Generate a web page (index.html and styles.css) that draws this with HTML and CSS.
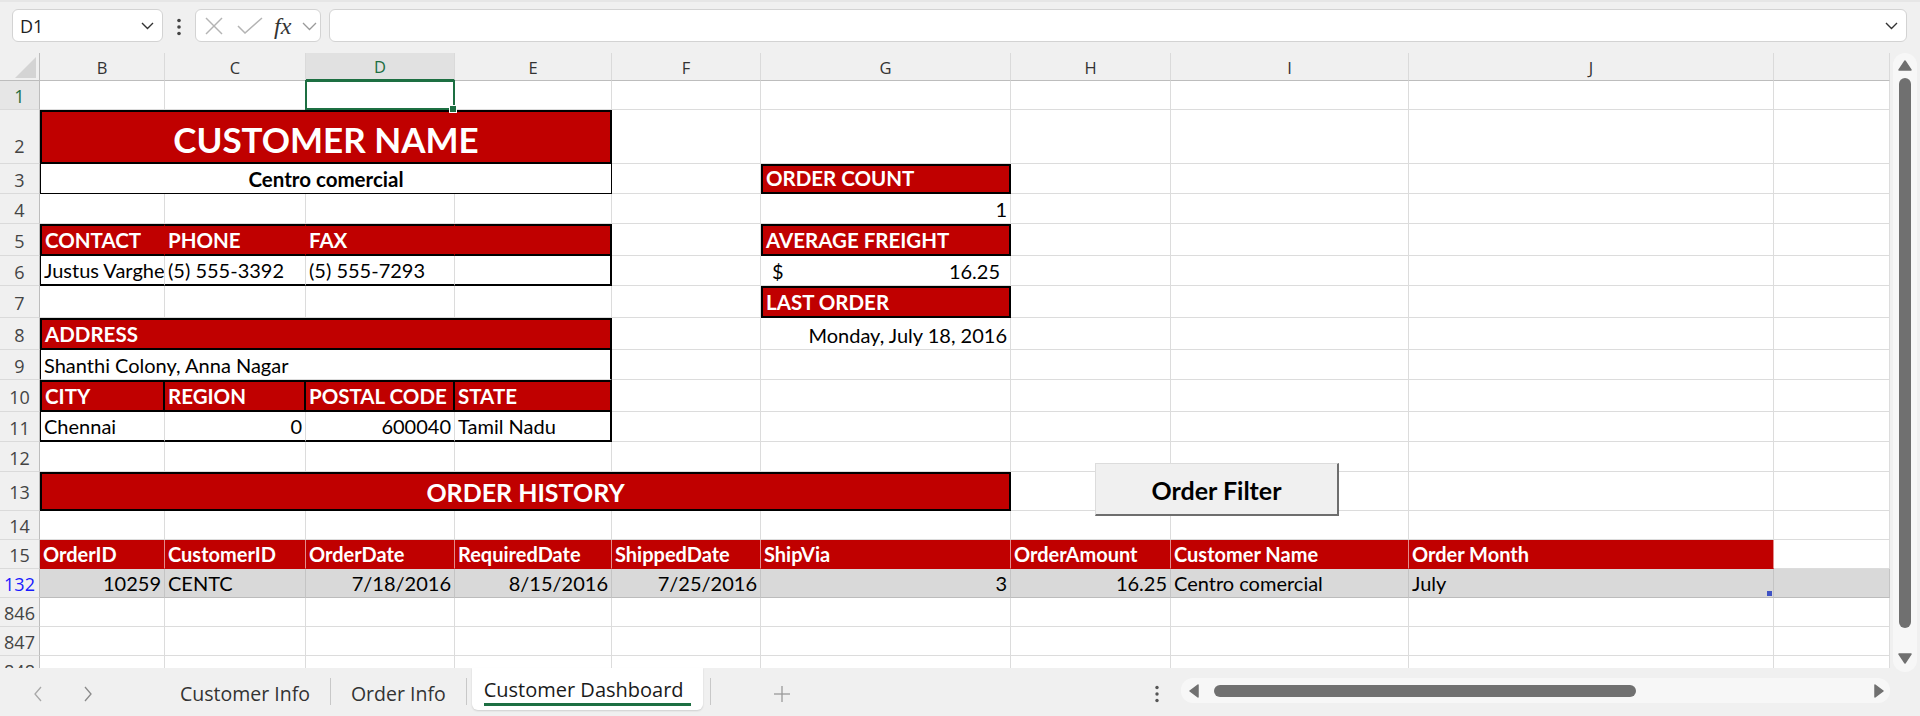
FILE: index.html
```html
<!DOCTYPE html>
<html>
<head>
<meta charset="utf-8">
<title>Customer Dashboard</title>
<link rel="stylesheet" href="styles.css">
</head>
<body>
<div class="app">
  <div class="fbar">
    <div class="namebox"><span class="nb-text">D1</span><svg class="chev" width="13" height="8" viewBox="0 0 13 8"><polyline points="1,1 6.5,6.5 12,1" fill="none" stroke="#333" stroke-width="1.4"/></svg></div>
    <svg class="vdots" width="8" height="18" viewBox="0 0 8 18"><circle cx="4" cy="2.5" r="1.8" fill="#444"/><circle cx="4" cy="9" r="1.8" fill="#444"/><circle cx="4" cy="15.5" r="1.8" fill="#444"/></svg>
    <div class="fxbox">
      <svg class="ico-x" width="20" height="18" viewBox="0 0 20 18"><line x1="2" y1="1" x2="18" y2="17" stroke="#b4b4b4" stroke-width="1.5"/><line x1="18" y1="1" x2="2" y2="17" stroke="#b4b4b4" stroke-width="1.5"/></svg>
      <svg class="ico-ok" width="26" height="17" viewBox="0 0 26 17"><polyline points="1,9 8,16 25,1" fill="none" stroke="#b4b4b4" stroke-width="1.5"/></svg>
      <span class="fx">fx</span>
      <svg class="ico-dd" width="15" height="9" viewBox="0 0 15 9"><polyline points="1,1 7.5,7.5 14,1" fill="none" stroke="#9a9a9a" stroke-width="1.3"/></svg>
    </div>
    <div class="finput"><svg class="chev" width="13" height="8" viewBox="0 0 13 8"><polyline points="1,1 6.5,6.5 12,1" fill="none" stroke="#333" stroke-width="1.4"/></svg></div>
  </div>

  <div class="main">
    <div class="sheet">
      <div class="corner"><svg width="40" height="28" viewBox="0 0 40 28"><polygon points="15,25 36,4 36,25" fill="#d4d4d4"/></svg></div>
      <div class="ch">B</div><div class="ch">C</div><div class="ch csel">D</div><div class="ch">E</div><div class="ch">F</div><div class="ch">G</div><div class="ch">H</div><div class="ch">I</div><div class="ch">J</div><div class="ch"></div>

      <div class="rh rsel">1</div>
      <div class="c"></div><div class="c"></div><div class="c sel"></div><div class="c"></div><div class="c"></div><div class="c"></div><div class="c"></div><div class="c"></div><div class="c"></div><div class="c"></div>

      <div class="rh rh2">2</div>
      <div class="c red big ctr bx span4">CUSTOMER NAME</div>
      <div class="c"></div><div class="c"></div><div class="c"></div><div class="c"></div><div class="c"></div><div class="c"></div>

      <div class="rh">3</div>
      <div class="c bold ctr bl1 br1 bb1 span4">Centro comercial</div>
      <div class="c"></div>
      <div class="c red lbl bx">ORDER COUNT</div>
      <div class="c"></div><div class="c"></div><div class="c"></div><div class="c"></div>

      <div class="rh">4</div>
      <div class="c"></div><div class="c"></div><div class="c"></div><div class="c"></div><div class="c"></div>
      <div class="c r">1</div>
      <div class="c"></div><div class="c"></div><div class="c"></div><div class="c"></div>

      <div class="rh">5</div>
      <div class="c red lbl bt2 bb2 bl2">CONTACT</div>
      <div class="c red lbl bt2 bb2">PHONE</div>
      <div class="c red lbl bt2 bb2">FAX</div>
      <div class="c red lbl bt2 bb2 br2"></div>
      <div class="c"></div>
      <div class="c red lbl bx">AVERAGE FREIGHT</div>
      <div class="c"></div><div class="c"></div><div class="c"></div><div class="c"></div>

      <div class="rh">6</div>
      <div class="c bl1 bb2">Justus Varghese</div>
      <div class="c bb2">(5) 555-3392</div>
      <div class="c bb2">(5) 555-7293</div>
      <div class="c bb2 br2"></div>
      <div class="c"></div>
      <div class="c acct"><span>$</span><span>16.25</span></div>
      <div class="c"></div><div class="c"></div><div class="c"></div><div class="c"></div>

      <div class="rh">7</div>
      <div class="c"></div><div class="c"></div><div class="c"></div><div class="c"></div><div class="c"></div>
      <div class="c red lbl bx">LAST ORDER</div>
      <div class="c"></div><div class="c"></div><div class="c"></div><div class="c"></div>

      <div class="rh">8</div>
      <div class="c red lbl bx span4">ADDRESS</div>
      <div class="c"></div>
      <div class="c r">Monday, July 18, 2016</div>
      <div class="c"></div><div class="c"></div><div class="c"></div><div class="c"></div>

      <div class="rh">9</div>
      <div class="c bl1 br2 span4">Shanthi Colony, Anna Nagar</div>
      <div class="c"></div><div class="c"></div><div class="c"></div><div class="c"></div><div class="c"></div><div class="c"></div>

      <div class="rh">10</div>
      <div class="c red lbl bx">CITY</div>
      <div class="c red lbl bt2 bb2 br2">REGION</div>
      <div class="c red lbl bt2 bb2 br2">POSTAL CODE</div>
      <div class="c red lbl bt2 bb2 br2">STATE</div>
      <div class="c"></div><div class="c"></div><div class="c"></div><div class="c"></div><div class="c"></div><div class="c"></div>

      <div class="rh">11</div>
      <div class="c bl1 bb2">Chennai</div>
      <div class="c r bb2">0</div>
      <div class="c r bb2">600040</div>
      <div class="c bb2 br2">Tamil Nadu</div>
      <div class="c"></div><div class="c"></div><div class="c"></div><div class="c"></div><div class="c"></div><div class="c"></div>

      <div class="rh">12</div>
      <div class="c"></div><div class="c"></div><div class="c"></div><div class="c"></div><div class="c"></div><div class="c"></div><div class="c"></div><div class="c"></div><div class="c"></div><div class="c"></div>

      <div class="rh">13</div>
      <div class="c red hist ctr bx span6">ORDER HISTORY</div>
      <div class="c"></div><div class="c"></div><div class="c"></div><div class="c"></div>

      <div class="rh">14</div>
      <div class="c"></div><div class="c"></div><div class="c"></div><div class="c"></div><div class="c"></div><div class="c"></div><div class="c"></div><div class="c"></div><div class="c"></div><div class="c"></div>

      <div class="rh">15</div>
      <div class="c th">OrderID</div>
      <div class="c th">CustomerID</div>
      <div class="c th">OrderDate</div>
      <div class="c th">RequiredDate</div>
      <div class="c th">ShippedDate</div>
      <div class="c th">ShipVia</div>
      <div class="c th">OrderAmount</div>
      <div class="c th">Customer Name</div>
      <div class="c th">Order Month</div>
      <div class="c"></div>

      <div class="rh rblue">132</div>
      <div class="c gry r">10259</div>
      <div class="c gry">CENTC</div>
      <div class="c gry r">7/18/2016</div>
      <div class="c gry r">8/15/2016</div>
      <div class="c gry r">7/25/2016</div>
      <div class="c gry r">3</div>
      <div class="c gry r">16.25</div>
      <div class="c gry">Centro comercial</div>
      <div class="c gry tblh">July</div>
      <div class="c gry"></div>

      <div class="rh">846</div>
      <div class="c"></div><div class="c"></div><div class="c"></div><div class="c"></div><div class="c"></div><div class="c"></div><div class="c"></div><div class="c"></div><div class="c"></div><div class="c"></div>

      <div class="rh">847</div>
      <div class="c"></div><div class="c"></div><div class="c"></div><div class="c"></div><div class="c"></div><div class="c"></div><div class="c"></div><div class="c"></div><div class="c"></div><div class="c"></div>

      <div class="rh">848</div>
      <div class="c"></div><div class="c"></div><div class="c"></div><div class="c"></div><div class="c"></div><div class="c"></div><div class="c"></div><div class="c"></div><div class="c"></div><div class="c"></div>

      <div class="btn">Order Filter</div>
    </div>
    <div class="vscroll">
      <div class="vtrack">
        <svg class="varr" width="14" height="11" viewBox="0 0 14 11"><polygon points="7,1 13,10 1,10" fill="#707070" stroke="#707070" stroke-linejoin="round" stroke-width="1.5"/></svg>
        <div class="vthumb"></div>
        <svg class="varr" width="14" height="11" viewBox="0 0 14 11"><polygon points="1,1 13,1 7,10" fill="#707070" stroke="#707070" stroke-linejoin="round" stroke-width="1.5"/></svg>
      </div>
    </div>
  </div>

  <div class="tabbar">
    <div class="tabnav">
      <svg width="10" height="16" viewBox="0 0 10 16"><polyline points="8,1 2,8 8,15" fill="none" stroke="#a8a8a8" stroke-width="1.3"/></svg>
      <svg width="10" height="16" viewBox="0 0 10 16"><polyline points="2,1 8,8 2,15" fill="none" stroke="#8a8a8a" stroke-width="1.3"/></svg>
    </div>
    <div class="tab">Customer Info</div>
    <div class="tsep"></div>
    <div class="tab">Order Info</div>
    <div class="tsep"></div>
    <div class="tab active"><span class="tlabel">Customer Dashboard</span></div>
    <div class="tsep"></div>
    <div class="tadd"><svg width="16" height="16" viewBox="0 0 16 16"><line x1="8" y1="0" x2="8" y2="16" stroke="#9a9a9a" stroke-width="1.3"/><line x1="0" y1="8" x2="16" y2="8" stroke="#9a9a9a" stroke-width="1.3"/></svg></div>
    <div class="tspacer"></div>
    <svg class="hdots" width="8" height="18" viewBox="0 0 8 18"><circle cx="4" cy="2.5" r="1.7" fill="#555"/><circle cx="4" cy="9" r="1.7" fill="#555"/><circle cx="4" cy="15.5" r="1.7" fill="#555"/></svg>
    <div class="hscroll">
      <svg width="10" height="14" viewBox="0 0 10 14"><polygon points="9,1 9,13 1,7" fill="#707070" stroke="#707070" stroke-linejoin="round" stroke-width="1.5"/></svg>
      <div class="hthumb"></div>
      <div class="hgap"></div>
      <svg width="10" height="14" viewBox="0 0 10 14"><polygon points="1,1 1,13 9,7" fill="#707070" stroke="#707070" stroke-linejoin="round" stroke-width="1.5"/></svg>
    </div>
  </div>
</div>
</body>
</html>
```

FILE: styles.css
```css
* { box-sizing: border-box; margin: 0; padding: 0; }
html, body { width: 1920px; height: 716px; overflow: hidden; background: #f0f0f0; }
body { font-family: "Open Sans", "Noto Sans", sans-serif; color: #222; }

.app { width: 1920px; height: 716px; display: flex; flex-direction: column; }

/* formula bar */
.fbar { height: 53px; flex: none; display: flex; align-items: flex-start; padding: 9px 0 0 12px; border-top: 2px solid #e6e6e6; }
.namebox { width: 151px; height: 33px; background: #fff; border: 1px solid #d3d3d3; border-radius: 6px; display: flex; align-items: center; justify-content: space-between; padding: 0 8px 0 7px; margin-top: -2px; }
.nb-text { font-size: 18px; color: #222; }
.vdots { margin: 7px 0 0 12px; }
.fxbox { width: 126px; height: 33px; margin: -2px 0 0 12px; background: #fff; border: 1px solid #d3d3d3; border-radius: 6px; display: flex; align-items: center; padding-left: 8px; }
.ico-ok { margin-left: 13px; }
.fx { margin-left: 11px; font-family: "Liberation Serif", serif; font-style: italic; font-size: 24px; color: #333; line-height: 1; width: 21px; }
.ico-dd { margin-left: 7px; margin-top: 2px; }
.finput { width: 1578px; height: 33px; margin: -2px 0 0 8px; background: #fff; border: 1px solid #d3d3d3; border-radius: 6px; display: flex; align-items: center; justify-content: flex-end; padding-right: 8px; }

/* sheet */
.main { height: 615px; flex: none; display: flex; }
.sheet {
  width: 1890px; height: 615px; overflow: hidden; position: relative; background: #fff;
  display: grid;
  grid-template-columns: 40px 125px 141px 149px 157px 149px 250px 160px 238px 365px 116px;
  grid-template-rows: 28px 29px 54px 30px 30px 32px 30px 32px 32px 30px 32px 30px 30px 39px 29px 29px 29px 29px 29px 29px;
}
.corner { background: #f0f0f0; border-right: 1px solid #bdbdbd; border-bottom: 1px solid #bdbdbd; }
.corner svg { display: block; }
.ch { background: #f0f0f0; border-right: 1px solid #dadada; border-bottom: 1px solid #bdbdbd; display: flex; align-items: center; justify-content: center; font-size: 16.5px; color: #333; padding-top: 1px; }
.csel { background: #e1e1e1; color: #1d6f42; border-bottom: 2px solid #1d6f42; }
.rh { background: #f0f0f0; border-right: 1px solid #bdbdbd; border-bottom: 1px solid #dadada; display: flex; align-items: center; justify-content: center; font-size: 18px; color: #444; line-height: 20px; padding-top: 2px; }
.rh2 { padding-top: 18px; }
.rsel { color: #1d6f42; background: #e6e6e6; }
.rblue { color: #1a1aff; }

.c {
  border-right: 1px solid #dcdcdc; border-bottom: 1px solid #dcdcdc;
  display: flex; align-items: flex-end; justify-content: flex-start;
  padding: 0 3px 2px 3px; overflow: hidden; white-space: nowrap;
  font-family: "Lato", "Carlito", sans-serif; font-size: 20px; line-height: 24px; color: #000;
}
.r { justify-content: flex-end; }
.ctr { justify-content: center; }
.bold { font-weight: 700; font-size: 20.5px; }
.span4 { grid-column: span 4; }
.span6 { grid-column: span 6; }

.red { background: #c00000; color: #fff; font-weight: 700; border-right-color: #c00000; border-bottom-color: #c00000; }
.lbl { font-size: 20.5px; }
.big { font-size: 35px; line-height: 42px; }
.hist { font-size: 25px; line-height: 30px; }
.th { background: #c00000; color: #fff; font-weight: 700; border-right-color: rgba(255,255,255,0.55); border-bottom-color: #c00000; }
.gry { background: #d9d9d9; border-right-color: #c4c4c4; border-bottom-color: #bcbcbc; }
.acct { justify-content: space-between; padding: 0 10px 2px 11px; }

.bx { border: 2px solid #000; }
.bt2 { border-top: 2px solid #000; }
.bb2 { border-bottom: 2px solid #000; }
.bl2 { border-left: 2px solid #000; }
.br2 { border-right: 2px solid #000; }
.bl1 { border-left: 1px solid #000; }
.br1 { border-right: 1px solid #000; }
.bb1 { border-bottom: 1px solid #000; }

.sel { position: relative; overflow: visible; }
.sel::after { content: ""; position: absolute; left: -1px; top: -1px; right: -1px; bottom: -1px; border: 2px solid #1d6f42; z-index: 2; }
.sel::before { content: ""; position: absolute; right: -3px; bottom: -4px; width: 6px; height: 6px; background: #1d6f42; border: 1px solid #fff; z-index: 3; }

.tblh { position: relative; }
.tblh::after { content: ""; position: absolute; right: 1px; bottom: 1px; width: 5px; height: 5px; background: #3f53c4; }

.btn {
  position: absolute; left: 1095px; top: 410px; width: 244px; height: 53px;
  background: #f0f0f0; border-top: 1px solid #dcdcdc; border-left: 1px solid #dcdcdc;
  border-right: 2px solid #6e6e6e; border-bottom: 2px solid #6e6e6e;
  display: flex; align-items: center; justify-content: center;
  font-family: "Lato", sans-serif; font-weight: 700; font-size: 25px; color: #000; padding-top: 2px;
}

/* vertical scrollbar */
.vscroll { width: 30px; height: 619px; padding: 0 3px 0 3px; position: relative; z-index: 1; }
.vtrack { width: 24px; height: 619px; background: #f7f7f7; border-radius: 12px; display: flex; flex-direction: column; align-items: center; padding-top: 7px; }
.varr { display: block; flex: none; }
.vthumb { width: 12px; height: 550px; background: #707070; border-radius: 6px; margin: 7px 0 25px; flex: none; }

/* tab bar */
.tabbar { height: 48px; flex: none; display: flex; align-items: stretch; }
.tabnav { width: 160px; display: flex; align-items: center; padding: 3px 0 0 33px; gap: 40px; }
.tabnav svg { display: block; }
.tab { padding: 3px 20px 0; display: flex; align-items: center; font-size: 19.5px; color: #333; white-space: nowrap; }
.tsep { width: 1px; background: #c8c8c8; margin: 10px 0 11px; }
.tab.active { margin: 0 7px 6px 5px; width: 231px; padding: 0 12px; background: #fff; color: #1a1a1a; font-size: 20px; border-radius: 0 0 6px 6px; box-shadow: 0 1px 2px rgba(0,0,0,0.14); position: relative; }
.tab.active::after { content: ""; position: absolute; left: 12px; right: 12px; bottom: 4px; height: 3px; background: #1d6f42; }
.tadd { margin-left: 63px; display: flex; align-items: center; padding-top: 4px; }
.tadd svg { display: block; }
.tspacer { flex: 1; }
.hdots { align-self: center; margin: 4px 20px 0 0; }
.hscroll { width: 709px; height: 25px; margin: 10px 30px 0 0; background: #f7f7f7; border-radius: 12px; display: flex; align-items: center; padding: 0 6px 0 8px; }
.hscroll svg { display: block; flex: none; }
.hthumb { width: 422px; height: 12px; background: #707070; border-radius: 6px; margin-left: 15px; flex: none; }
.hgap { flex: 1; }
```
